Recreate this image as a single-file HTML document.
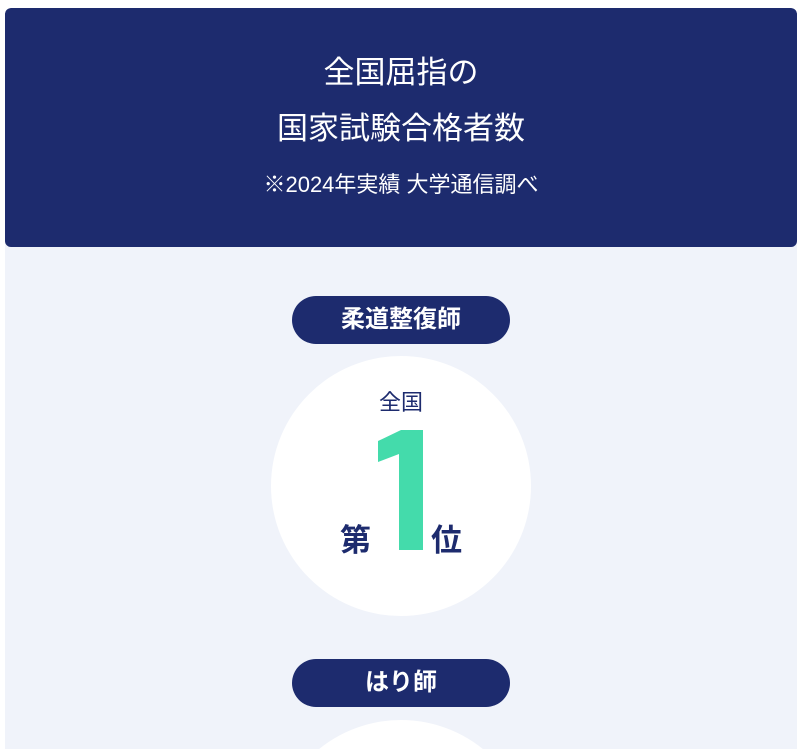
<!DOCTYPE html>
<html><head><meta charset="utf-8"><style>
*{margin:0;padding:0;box-sizing:border-box}
html,body{width:800px;height:749px;overflow:hidden}
body{background:#fff;font-family:"Liberation Sans","Noto Sans CJK JP",sans-serif;position:relative}
.wrap{position:absolute;left:5px;top:8px;width:792px;height:741px;background:#f0f3fa;border-radius:6px 6px 0 0;overflow:hidden}
.hd{position:absolute;left:0;top:0;width:792px;height:239px;background:#1d2b6e;border-radius:6px;color:#fff;text-align:center}
.t{position:absolute;left:0;width:100%;font-size:31px;line-height:1}
.pill{position:absolute;left:287px;width:218px;height:48px;border-radius:24px;background:#1d2b6e;color:#fff;font-weight:bold;font-size:24px;text-align:center;line-height:48px}
.c{position:absolute;left:266px;width:260px;height:260px;border-radius:50%;background:#fff}
</style></head><body>
<div class="wrap">
<div class="hd">
<div class="t" style="top:49px">全国屈指の</div>
<div class="t" style="top:105px">国家試験合格者数</div>
<div class="t" style="top:166px;font-size:22px">※2024年実績 大学通信調べ</div>
</div>
<div class="pill" style="top:288px">柔道整復師</div>
<div class="c" style="top:348px">
<div style="position:absolute;top:29px;width:100%;text-align:center;font-size:22px;color:#1d2b6e">全国</div>
<svg style="position:absolute;left:0;top:0" width="260" height="260"><polygon points="152,74 130,74 107,85 107,106 128,98 128,194 152,194" fill="#44dbab"/></svg>
<div style="position:absolute;left:69px;top:159px;font-size:31px;font-weight:bold;color:#1d2b6e">第</div>
<div style="position:absolute;left:160px;top:159px;font-size:31px;font-weight:bold;color:#1d2b6e">位</div>
</div>
<div class="pill" style="top:651px">はり師</div>
<div class="c" style="top:712px"></div>
</div>
</body></html>
